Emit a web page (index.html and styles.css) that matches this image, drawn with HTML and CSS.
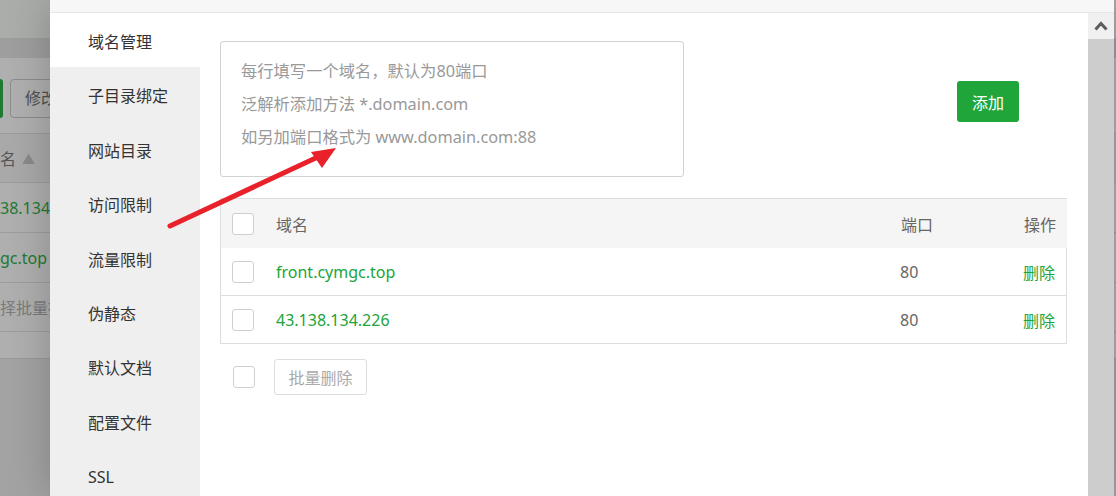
FILE: index.html
```html
<!DOCTYPE html>
<html lang="zh-CN">
<head>
<meta charset="utf-8">
<title>域名管理</title>
<link rel="stylesheet" href="styles.css">
</head>
<body>
<div class="backdrop">
  <div class="bd-top"></div>
  <div class="bd-band"></div>
  <div class="bd-panel">
    <div class="bd-toolbar"><span class="bd-green"></span><span class="bd-btn">修改</span></div>
    <div class="bd-row bd-head"><span class="bd-t1">名</span><span class="bd-sort">▲</span></div>
    <div class="bd-row"><span class="bd-link">38.134.</span></div>
    <div class="bd-row"><span class="bd-link">gc.top</span></div>
    <div class="bd-foot"><span class="bd-t4">择批量操</span></div>
  </div>
  <div class="bd-rest"></div>
</div>

<div class="modal">
  <div class="modal-title"></div>
  <div class="modal-body">
    <ul class="side">
      <li class="side-item active">域名管理</li>
      <li class="side-item">子目录绑定</li>
      <li class="side-item">网站目录</li>
      <li class="side-item">访问限制</li>
      <li class="side-item">流量限制</li>
      <li class="side-item">伪静态</li>
      <li class="side-item">默认文档</li>
      <li class="side-item">配置文件</li>
      <li class="side-item">SSL</li>
    </ul>
    <div class="main">
      <div class="add-row">
        <div class="ta">
          <div>每行填写一个域名，默认为80端口</div>
          <div>泛解析添加方法 *.domain.com</div>
          <div>如另加端口格式为 www.domain.com:88</div>
        </div>
        <button class="btn-add">添加</button>
      </div>
      <div class="table">
        <div class="thead">
          <div class="c-check"><span class="cb"></span></div>
          <div class="c-domain">域名</div>
          <div class="c-port">端口</div>
          <div class="c-op">操作</div>
        </div>
        <div class="trow">
          <div class="c-check"><span class="cb"></span></div>
          <div class="c-domain link">front.cymgc.top</div>
          <div class="c-port">80</div>
          <div class="c-op link">删除</div>
        </div>
        <div class="trow">
          <div class="c-check"><span class="cb"></span></div>
          <div class="c-domain link">43.138.134.226</div>
          <div class="c-port">80</div>
          <div class="c-op link">删除</div>
        </div>
      </div>
      <div class="batch">
        <span class="cb"></span>
        <button class="btn-batch">批量删除</button>
      </div>
    </div>
    <div class="scrollbar">
      <div class="sb-up">
        <svg width="14" height="10" viewBox="0 0 14 10"><polyline points="1.5,8.5 7,2.5 12.5,8.5" fill="none" stroke="#5c5c5c" stroke-width="3"/></svg>
      </div>
      <div class="sb-track"></div>
    </div>
  </div>
</div>

<svg class="annot" width="1116" height="496" viewBox="0 0 1116 496">
  <line x1="170" y1="226" x2="320" y2="156" stroke="#e8212b" stroke-width="5" stroke-linecap="round"/>
  <polygon points="336,148 311,152 322,168" fill="#e8212b"/>
</svg>
</body>
</html>
```

FILE: styles.css
```css
* { box-sizing: border-box; }
html, body {
  margin: 0;
  padding: 0;
  width: 1116px;
  height: 496px;
  overflow: hidden;
  font-family: "Noto Sans", "Noto Sans CJK SC", sans-serif;
  font-size: 16px;
}
body { position: relative; background: #a2a2a2; }

/* dimmed page behind the dialog */
.backdrop {
  display: flex;
  flex-direction: column;
  height: 496px;
  overflow: hidden;
  white-space: nowrap;
}
.bd-top { height: 38px; background: #abadab; flex: none; }
.bd-band { height: 20px; background: #9e9e9e; flex: none; }
.bd-panel { background: #afafaf; padding-top: 21px; flex: none; height: 300px; }
.bd-toolbar { display: flex; height: 39px; margin-bottom: 15px; }
.bd-green { width: 40px; margin-left: -37px; background: #1d7a2e; border-radius: 3px; }
.bd-btn {
  margin-left: 7px;
  width: 70px;
  border: 1px solid #8c8c8c;
  border-radius: 4px;
  color: #4f4f4f;
  padding-left: 14px;
  line-height: 37px;
}
.bd-row {
  height: 50px;
  border-top: 1px solid #9c9c9c;
  display: flex;
  align-items: center;
}
.bd-head { height: 49px; background: #a9a9a9; }
.bd-t1 { color: #555; }
.bd-sort { margin-left: 6px; color: #8a8a8a; font-size: 13px; }
.bd-link { color: #1e7a33; }
.bd-foot {
  height: 50px;
  border-top: 1px solid #9c9c9c;
  border-bottom: 1px solid #9c9c9c;
  display: flex;
  align-items: center;
}
.bd-t4 { color: #7b7b7b; }
.bd-rest { flex: 1; background: #a3a3a3; border-top: 1px solid #9a9a9a; }

/* dialog */
.modal {
  position: absolute;
  left: 50px;
  top: 0;
  width: 1064px;
  height: 496px;
  background: #fff;
  display: flex;
  flex-direction: column;
  box-shadow: 0 0 40px rgba(0, 0, 0, 0.22);
}
.modal-title {
  height: 13px;
  flex: none;
  background: #f7f7f7;
  border-bottom: 1px solid #e6e6e6;
}
.modal-body { flex: 1; display: flex; min-height: 0; }

.side {
  list-style: none;
  margin: 0;
  padding: 0;
  width: 150px;
  flex: none;
  background: #efefef;
}
.side-item {
  height: 54.4px;
  line-height: 54.4px;
  padding-top: 2px;
  padding-left: 38px;
  color: #333;
  font-size: 16px;
  overflow: visible;
}
.side-item.active { background: #fff; }

.main { flex: 1; padding: 28px 0 0 20px; }
.add-row { display: flex; align-items: flex-start; }
.ta {
  width: 464px;
  height: 136px;
  border: 1px solid #d2d2d2;
  border-radius: 3px;
  padding: 13px 20px;
  color: #999;
  line-height: 33px;
  font-size: 16.3px;
}
.btn-add {
  margin-left: 273px;
  margin-top: 40px;
  width: 62px;
  height: 41px;
  border: none;
  border-radius: 3px;
  background: #20a53a;
  color: #fff;
  font-family: inherit;
  font-size: 16px;
  padding: 0;
}

.table { margin-top: 21px; width: 847px; }
.thead, .trow { display: flex; align-items: center; color: #666; }
.thead {
  height: 50px;
  background: #f5f5f5;
  border-top: 1px solid #dddddd;
  border-left: 1px solid #dddddd;
}
.trow {
  height: 48px;
  border: 1px solid #dddddd;
  border-top: none;
}
.c-check { width: 55px; padding-left: 11px; display: flex; align-items: center; }
.c-domain { flex: 1; }
.c-port { width: 100px; }
.c-op { width: 66px; text-align: right; padding-right: 11px; }
.link { color: #20a53a; }

.cb {
  display: inline-block;
  width: 22px;
  height: 22px;
  border: 1px solid #cfcfcf;
  border-radius: 3px;
  background: #fff;
}
.batch {
  display: flex;
  align-items: center;
  margin-top: 15px;
  padding-left: 13px;
}
.btn-batch {
  margin-left: 19px;
  width: 93px;
  height: 36px;
  border: 1px solid #dddddd;
  border-radius: 3px;
  background: #fff;
  color: #aaa;
  font-family: inherit;
  font-size: 16px;
  padding: 0;
}

.scrollbar { width: 26px; flex: none; display: flex; flex-direction: column; }
.sb-up {
  height: 26px;
  background: #f0f0f0;
  display: flex;
  align-items: center;
  justify-content: center;
}
.sb-track { flex: 1; background: #cdcdcd; }

.annot { position: absolute; left: 0; top: 0; pointer-events: none; }
```
